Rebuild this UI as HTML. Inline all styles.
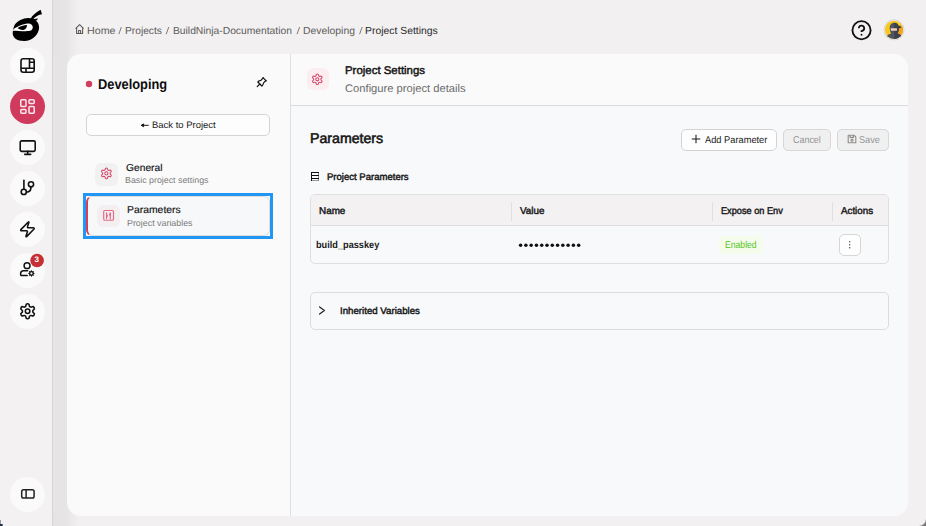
<!DOCTYPE html>
<html><head><meta charset="utf-8">
<style>
*{box-sizing:border-box;margin:0;padding:0}
html,body{width:926px;height:526px;overflow:hidden;background:#f2f0f1;font-family:"Liberation Sans",sans-serif;color:#111}
.a{position:absolute}
.t{position:absolute;white-space:nowrap;line-height:1;transform-origin:0 0}
.circ{position:absolute;left:10px;width:35px;height:35px;border-radius:50%;background:#fafafa}
</style></head><body>

<!-- shadow band right of sidebar -->
<div class="a" style="left:53px;top:0;width:30px;height:526px;background:linear-gradient(to right,#e4e2e3 0px,#e7e5e6 14px,#f2f0f1 26px)"></div>
<div class="a" style="left:53px;top:54px;width:14px;height:462px;background:#e6e4e5"></div>

<!-- sidebar -->
<div class="a" style="left:0;top:0;width:53px;height:526px;background:#f3f1f2;border-right:1px solid #d6d4d5"></div>

<!-- panel -->
<div class="a" style="left:67px;top:54px;width:841px;height:462px;background:#fafafa;border-radius:14px;overflow:hidden">
  <div class="a" style="left:223px;top:0;width:1px;height:462px;background:#dfdfdf"></div>
  <div class="a" style="left:224px;top:51px;width:617px;height:1px;background:#dcdcdc"></div>
  <div class="a" style="left:224px;top:52px;width:617px;height:410px;background:#f8f9fb"></div>
</div>

<!-- sidebar circles -->
<div class="circ" style="top:48px"></div>
<div class="circ" style="top:88.5px;background:#d03b5d"></div>
<div class="circ" style="top:129.5px"></div>
<div class="circ" style="top:170.5px"></div>
<div class="circ" style="top:211.5px"></div>
<div class="circ" style="top:252.5px"></div>
<div class="circ" style="top:293.5px"></div>
<div class="circ" style="top:477px"></div>

<svg class="a" style="left:0;top:0" width="926" height="526" viewBox="0 0 926 526">
  <!-- logo -->
  <path d="M14.6 25 C17.2 21 23 18.2 28.2 18.1 C34.2 18 39.2 21.6 39.1 27.6 C39 33.6 33.6 40.6 25.2 41 C17.2 41.4 12.4 37.6 12.7 33 C12.9 30 13.6 27 14.6 25 Z" fill="#000"/>
  <path d="M30.4 18.9 C32.4 15.6 36 12 40.6 9.8 L42 14.2 C38.6 14.6 35.2 16.6 32.9 19.6 Z" fill="#000"/>
  <path d="M32.6 19.2 L37.9 18.5 L36.9 20.3 L33.6 20.9 Z" fill="#000"/>
  <path d="M12.9 29.9 C16 27.4 21.2 24.4 27.1 23.6 C30.6 23.1 33 24.9 32.8 27.6 C32.6 30 30.6 31.1 28.6 31.1 C23.2 31.2 17.2 31 12.9 30.7 Z" fill="#fff"/>
  <path d="M17.6 28 C20 26.2 23.8 25 27.1 24.9 C26.9 27.6 25.3 29.7 23.1 29.9 C20.9 30.1 18.9 29.2 17.6 28 Z" fill="#000"/>
  <!-- icon 1 layout -->
  <g fill="none" stroke="#111" stroke-width="1.6" stroke-linejoin="round">
    <rect x="21" y="58.8" width="13.2" height="13.4" rx="2.2"/>
    <path d="M21 68.2 H34.2 M29.5 58.8 V68.2 M29.5 62.3 H34.2 M26 68.2 V72.2"/>
  </g>
  <!-- icon 2 dashboard (lucide layout-dashboard 18px) -->
  <g transform="translate(18.5 97.4) scale(0.75)" fill="none" stroke="#fde8ee" stroke-width="2" stroke-linejoin="round">
    <rect x="3" y="3" width="7" height="9" rx="1.3"/>
    <rect x="14" y="3" width="7" height="5" rx="1.3"/>
    <rect x="14" y="12" width="7" height="9" rx="1.3"/>
    <rect x="3" y="16" width="7" height="5" rx="1.3"/>
  </g>
  <!-- monitor -->
  <g transform="translate(18.7 138.6) scale(0.75)" fill="none" stroke="#111" stroke-width="2.1" stroke-linecap="round" stroke-linejoin="round">
    <rect x="2" y="3" width="20" height="14" rx="2"/>
    <path d="M8 21h8 M12 17v4"/>
  </g>
  <!-- git -->
  <g fill="none" stroke="#111" stroke-width="1.6" stroke-linecap="round">
    <path d="M23.9 180.2 V189.3"/>
    <circle cx="23.8" cy="191.9" r="2.6"/>
    <circle cx="31" cy="184.3" r="2.6"/>
    <path d="M31 186.9 C31 190 29.2 192 26.4 192.2"/>
  </g>
  <!-- zap -->
  <g transform="translate(18.45 220.3) scale(0.75)" fill="none" stroke="#111" stroke-width="2.1" stroke-linecap="round" stroke-linejoin="round">
    <path d="M4 14a1 1 0 0 1-.78-1.63l9.9-10.2a.5.5 0 0 1 .86.46l-1.92 6.02A1 1 0 0 0 13 10h7a1 1 0 0 1 .78 1.63l-9.9 10.2a.5.5 0 0 1-.86-.46l1.92-6.02A1 1 0 0 0 11 14z"/>
  </g>
  <!-- user cog -->
  <g fill="none" stroke="#111" stroke-width="1.5" stroke-linecap="round" stroke-linejoin="round">
    <circle cx="27.05" cy="265.65" r="2.95"/>
    <path d="M27.6 270.8 H23.6 C21.8 270.8 20.6 272.2 20.6 273.8 V274.4 C20.6 275.1 21.1 275.6 21.8 275.6 H27.2"/>
  </g>
  <g fill="#111">
    <path d="M31.4 269.9 L32.3 271.3 L33.9 270.9 L33.5 272.5 L34.9 273.4 L33.5 274.3 L33.9 275.9 L32.3 275.5 L31.4 276.9 L30.5 275.5 L28.9 275.9 L29.3 274.3 L27.9 273.4 L29.3 272.5 L28.9 270.9 L30.5 271.3 Z"/>
  </g>
  <circle cx="31.4" cy="273.4" r="1.1" fill="#fafafa"/>
  <!-- badge -->
  <circle cx="37.1" cy="260.5" r="6.8" fill="#c62f33"/>
  <!-- settings -->
  <g transform="translate(18.6 302.3) scale(0.75)" fill="none" stroke="#111" stroke-width="2.1" stroke-linecap="round" stroke-linejoin="round">
    <path d="M12.22 2h-.44a2 2 0 0 0-2 2v.18a2 2 0 0 1-1 1.73l-.43.25a2 2 0 0 1-2 0l-.15-.08a2 2 0 0 0-2.73.73l-.22.38a2 2 0 0 0 .73 2.73l.15.1a2 2 0 0 1 1 1.72v.51a2 2 0 0 1-1 1.74l-.15.09a2 2 0 0 0-.73 2.73l.22.38a2 2 0 0 0 2.73.73l.15-.08a2 2 0 0 1 2 0l.43.25a2 2 0 0 1 1 1.73V20a2 2 0 0 0 2 2h.44a2 2 0 0 0 2-2v-.18a2 2 0 0 1 1-1.73l.43-.25a2 2 0 0 1 2 0l.15.08a2 2 0 0 0 2.73-.73l.22-.39a2 2 0 0 0-.73-2.73l-.15-.08a2 2 0 0 1-1-1.74v-.5a2 2 0 0 1 1-1.74l.15-.09a2 2 0 0 0 .73-2.73l-.22-.38a2 2 0 0 0-2.73-.73l-.15.08a2 2 0 0 1-2 0l-.43-.25a2 2 0 0 1-1-1.73V4a2 2 0 0 0-2-2z"/>
    <circle cx="12" cy="12" r="3"/>
  </g>
  <!-- panel toggle -->
  <g fill="none" stroke="#222" stroke-width="1.5">
    <rect x="21.7" y="489.7" width="12.4" height="8.3" rx="1.8"/>
    <path d="M26.1 489.7 V498"/>
  </g>

  <!-- breadcrumb home icon -->
  <g fill="none" stroke="#5a5a5a" stroke-width="1.05" stroke-linejoin="round">
    <path d="M75.6 28.6 L79.6 24.6 L83.6 28.6 M76.6 27.6 V33.4 H82.6 V27.6 M78.6 33.4 V30.5 H80.6 V33.4"/>
  </g>
  <!-- separators -->
  <g stroke="#6e6e6e" stroke-width="0.9">
    <path d="M121.4 27 L118.8 34.2 M168.8 27 L166.2 34.2 M299.6 27 L297 34.2 M362.2 27 L359.6 34.2"/>
  </g>

  <!-- help -->
  <g transform="translate(850.6 19.3) scale(0.91)" fill="none" stroke="#111" stroke-width="2" stroke-linecap="round" stroke-linejoin="round">
    <circle cx="12" cy="12" r="10"/>
    <path d="M9.09 9a3 3 0 0 1 5.83 1c0 2-3 3-3 3"/>
    <path d="M12 17h.01"/>
  </g>
  <!-- avatar -->
  <defs><clipPath id="avc"><circle cx="894" cy="29.8" r="9.1"/></clipPath></defs>
  <circle cx="894" cy="29.8" r="10.5" fill="#d6d6d7"/><circle cx="894" cy="29.8" r="9.9" fill="#e4e4e5"/>
  <g clip-path="url(#avc)">
    <rect x="884" y="19" width="21" height="22" fill="#f8c81c"/>
    <path d="M894.5 26 H905 V41 H894.5 Z" fill="#f5a21d"/>
    <path d="M885.5 41 C885.5 36.5 887.5 34.6 891.2 33.6 C890 32 889.7 30 889.7 27.6 C889.7 24.5 891.8 22.7 894.3 22.7 C896.8 22.7 898.9 24.5 898.9 27.6 C898.9 30 898.6 32 897.4 33.6 C901.1 34.6 903.1 36.5 903.1 41 Z" fill="#4d5360"/>
    <path d="M894.3 22.7 C896.8 22.7 898.9 24.5 898.9 27.6 C898.9 30 898.6 32 897.4 33.6 C901.1 34.6 903.1 36.5 903.1 41 H894.3 Z" fill="#3b414c"/>
  </g>
  <path d="M898.4 26.6 L900.6 25.4 L900.4 26.9 L901.7 27.6 L898.6 28.4 Z" fill="#2d323b"/>
  <rect x="890.7" y="28.3" width="6.3" height="2.4" rx="0.4" fill="#f6cbb8"/>
  <!-- developing dot -->
  <circle cx="89" cy="84" r="3.2" fill="#d03f5f"/>
  <!-- pin (tabler) -->
  <g transform="translate(254.6 75.3) scale(0.58)" fill="none" stroke="#111" stroke-width="2" stroke-linecap="round" stroke-linejoin="round">
    <path d="M15 4.5l-4 4l-4 1.5l-1.5 1.5l7 7l1.5 -1.5l1.5 -4l4 -4"/>
    <path d="M9 15l-4.5 4.5"/>
    <path d="M14.5 4l5.5 5.5"/>
  </g>
</svg>

<!-- back button -->
<div class="a" style="left:86px;top:114px;width:184px;height:22px;border:1px solid #d5d5d5;border-radius:5px;background:#fdfdfd"></div>
<svg class="a" style="left:140px;top:121px" width="10" height="9" viewBox="0 0 10 9" fill="none" stroke="#1a1a1a" stroke-width="1" stroke-linejoin="round"><path d="M1.6 4.3 H8.7"/><path d="M1.2 4.3 L3.6 2.9 V5.7 Z" fill="#1a1a1a"/></svg>

<!-- general item -->
<div class="a" style="left:95.3px;top:163px;width:22.4px;height:22.6px;border-radius:6px;background:#f2f1f2"></div>
<svg class="a" style="left:100.1px;top:167.2px" width="12.8" height="12.8" viewBox="0 0 24 24" fill="none" stroke="#d2476a" stroke-width="2" stroke-linecap="round" stroke-linejoin="round">
  <path d="M12.22 2h-.44a2 2 0 0 0-2 2v.18a2 2 0 0 1-1 1.73l-.43.25a2 2 0 0 1-2 0l-.15-.08a2 2 0 0 0-2.73.73l-.22.38a2 2 0 0 0 .73 2.73l.15.1a2 2 0 0 1 1 1.72v.51a2 2 0 0 1-1 1.74l-.15.09a2 2 0 0 0-.73 2.73l.22.38a2 2 0 0 0 2.73.73l.15-.08a2 2 0 0 1 2 0l.43.25a2 2 0 0 1 1 1.73V20a2 2 0 0 0 2 2h.44a2 2 0 0 0 2-2v-.18a2 2 0 0 1 1-1.73l.43-.25a2 2 0 0 1 2 0l.15.08a2 2 0 0 0 2.73-.73l.22-.39a2 2 0 0 0-.73-2.73l-.15-.08a2 2 0 0 1-1-1.74v-.5a2 2 0 0 1 1-1.74l.15-.09a2 2 0 0 0 .73-2.73l-.22-.38a2 2 0 0 0-2.73-.73l-.15.08a2 2 0 0 1-2 0l-.43-.25a2 2 0 0 1-1-1.73V4a2 2 0 0 0-2-2z"/>
  <circle cx="12" cy="12" r="3"/>
</svg>

<!-- selected item -->
<div class="a" style="left:83px;top:193px;width:190px;height:46px;border:3px solid #2196f3"></div>
<div class="a" style="left:86px;top:196px;width:184px;height:40px;border:1px solid #dcdcdc;border-left:2px solid #d0405f;border-radius:6px;background:#f7f8fa"></div>
<div class="a" style="left:97.1px;top:205px;width:22.6px;height:21.8px;border-radius:6px;background:#f5eef1"></div>
<svg class="a" style="left:101px;top:208px" width="15" height="15" viewBox="101 208 15 15" fill="none" stroke="#e06a86" stroke-width="1.15" stroke-linecap="round" stroke-linejoin="round">
  <rect x="103.7" y="210.5" width="9.8" height="9.7" rx="1.3"/>
  <path d="M106.6 212.9 V218.6 M110.3 212.9 V218.9"/>
  <path d="M106.3 214.6 L107.6 215.8 L106.3 217" stroke-width="1.1"/>
  <path d="M110.6 213.4 L109.4 214.5 L110.6 215.6" stroke-width="1.1"/>
</svg>

<!-- right header icon -->
<div class="a" style="left:307.4px;top:68px;width:21.8px;height:22px;border-radius:6px;background:#fbedf0"></div>
<svg class="a" style="left:311.2px;top:73px" width="12.6" height="12.6" viewBox="0 0 24 24" fill="none" stroke="#d2476a" stroke-width="2" stroke-linecap="round" stroke-linejoin="round">
  <path d="M12.22 2h-.44a2 2 0 0 0-2 2v.18a2 2 0 0 1-1 1.73l-.43.25a2 2 0 0 1-2 0l-.15-.08a2 2 0 0 0-2.73.73l-.22.38a2 2 0 0 0 .73 2.73l.15.1a2 2 0 0 1 1 1.72v.51a2 2 0 0 1-1 1.74l-.15.09a2 2 0 0 0-.73 2.73l.22.38a2 2 0 0 0 2.73.73l.15-.08a2 2 0 0 1 2 0l.43.25a2 2 0 0 1 1 1.73V20a2 2 0 0 0 2 2h.44a2 2 0 0 0 2-2v-.18a2 2 0 0 1 1-1.73l.43-.25a2 2 0 0 1 2 0l.15.08a2 2 0 0 0 2.73-.73l.22-.39a2 2 0 0 0-.73-2.73l-.15-.08a2 2 0 0 1-1-1.74v-.5a2 2 0 0 1 1-1.74l.15-.09a2 2 0 0 0 .73-2.73l-.22-.38a2 2 0 0 0-2.73-.73l-.15.08a2 2 0 0 1-2 0l-.43-.25a2 2 0 0 1-1-1.73V4a2 2 0 0 0-2-2z"/>
  <circle cx="12" cy="12" r="3"/>
</svg>

<!-- buttons -->
<div class="a" style="left:681px;top:129px;width:96px;height:22px;border:1px solid #d3d3d3;border-radius:5px;background:#fefefe"></div>
<svg class="a" style="left:691px;top:134px" width="10" height="10" viewBox="0 0 10 10" fill="none" stroke="#1a1a1a" stroke-width="1.05"><path d="M5 0.7 V9.2 M0.8 5 H9.3"/></svg>
<div class="a" style="left:783px;top:129px;width:48px;height:22px;border:1px solid #d7d7d7;border-radius:5px;background:#f0f0f1"></div>
<div class="a" style="left:837px;top:129px;width:52px;height:22px;border:1px solid #d7d7d7;border-radius:5px;background:#f0f0f1"></div>
<svg class="a" style="left:846.5px;top:133.8px" width="10" height="10" viewBox="0 0 10 10" fill="none" stroke="#8c8c8c" stroke-width="1.1" stroke-linejoin="round"><path d="M1.2 1.2 H7 L8.8 3 V8.8 H1.2 Z"/><path d="M3 1.2 V3.4 H6.4 V1.2"/><circle cx="5" cy="6.2" r="1.1"/></svg>

<!-- project parameters icon -->
<svg class="a" style="left:310px;top:171px" width="10" height="11" viewBox="310 171 10 11" shape-rendering="crispEdges">
  <rect x="311" y="180" width="8" height="1" fill="#9a9a9a"/><rect x="318" y="172" width="1" height="9" fill="#8a8a8a"/>
  <rect x="311" y="172" width="1" height="9" fill="#111"/><rect x="311" y="172" width="7.5" height="1" fill="#111"/>
  <rect x="311" y="175" width="7.5" height="1" fill="#111"/><rect x="311" y="178" width="7.5" height="1" fill="#111"/>
</svg>

<!-- table -->
<div class="a" style="left:310px;top:194px;width:579px;height:70px;border:1px solid #dfdfdf;border-radius:5px;overflow:hidden;background:#f8f9fb">
  <div class="a" style="left:0;top:0;width:577px;height:31px;background:#f3f1f2;border-bottom:1px solid #dedede"></div>
  <div class="a" style="left:200px;top:7px;width:1px;height:18.5px;background:#e1dfe0"></div>
  <div class="a" style="left:401px;top:7px;width:1px;height:18.5px;background:#e1dfe0"></div>
  <div class="a" style="left:521px;top:7px;width:1px;height:18.5px;background:#e1dfe0"></div>
</div>
<svg class="a" style="left:514px;top:240px" width="72" height="10" viewBox="0 0 72 10" fill="#111">
  <circle cx="6.6" cy="5.3" r="1.75"/><circle cx="11.88" cy="5.3" r="1.75"/><circle cx="17.16" cy="5.3" r="1.75"/><circle cx="22.44" cy="5.3" r="1.75"/><circle cx="27.72" cy="5.3" r="1.75"/><circle cx="33" cy="5.3" r="1.75"/><circle cx="38.28" cy="5.3" r="1.75"/><circle cx="43.56" cy="5.3" r="1.75"/><circle cx="48.84" cy="5.3" r="1.75"/><circle cx="54.12" cy="5.3" r="1.75"/><circle cx="59.4" cy="5.3" r="1.75"/><circle cx="64.68" cy="5.3" r="1.75"/>
</svg>
<div class="a" style="left:719px;top:236px;width:44px;height:18px;border-radius:3px;background:#f5fcec"></div>
<div class="a" style="left:839px;top:234px;width:22px;height:21.5px;border:1px solid #d6d6d6;border-radius:5px;background:#fefefe"></div>
<svg class="a" style="left:847px;top:239px" width="6" height="12" viewBox="0 0 6 12" fill="#444"><circle cx="2.7" cy="2.8" r="0.7"/><circle cx="2.7" cy="5.8" r="0.7"/><circle cx="2.7" cy="8.8" r="0.7"/></svg>

<!-- inherited -->
<div class="a" style="left:310px;top:292px;width:579px;height:38px;border:1px solid #dddddd;border-radius:5px;background:#f8f9fb"></div>
<svg class="a" style="left:317px;top:305px" width="10" height="11" viewBox="0 0 10 11" fill="none" stroke="#222" stroke-width="1.25" stroke-linecap="round" stroke-linejoin="round"><path d="M2.6 1.9 L7.4 5.5 L2.6 9.1"/></svg>

<div class="t" style="left:86.76px;top:27px;font-size:10.29px;font-weight:400;color:#5c5c5c;transform:scaleX(1.042);text-rendering:geometricPrecision;">Home</div>
<div class="t" style="left:125.01px;top:27px;font-size:10.29px;font-weight:400;color:#5c5c5c;transform:scaleX(0.994);text-rendering:geometricPrecision;">Projects</div>
<div class="t" style="left:173.0px;top:27px;font-size:10.29px;font-weight:400;color:#5c5c5c;transform:scaleX(1.0);text-rendering:geometricPrecision;">BuildNinja-Documentation</div>
<div class="t" style="left:302.79px;top:27px;font-size:10.29px;font-weight:400;color:#5c5c5c;transform:scaleX(1.01);text-rendering:geometricPrecision;">Developing</div>
<div class="t" style="left:364.99px;top:27px;font-size:10.29px;font-weight:400;color:#2b2b2b;transform:scaleX(1.011);text-rendering:geometricPrecision;">Project Settings</div>
<div class="t" style="left:98.4px;top:78px;font-size:14.19px;font-weight:700;color:#0d0d0d;transform:scaleX(0.904);text-rendering:geometricPrecision;">Developing</div>
<div class="t" style="left:152.29px;top:121px;font-size:9.37px;font-weight:400;color:#1a1a1a;transform:scaleX(1.011);text-rendering:geometricPrecision;">Back to Project</div>
<div class="t" style="left:126.1px;top:164px;font-size:10.0px;font-weight:400;color:#141414;transform:scaleX(1.026);text-rendering:geometricPrecision;-webkit-text-stroke:0.15px currentColor;">General</div>
<div class="t" style="left:125.08px;top:176px;font-size:8.7px;font-weight:400;color:#7b7b7b;transform:scaleX(1.017);text-rendering:geometricPrecision;">Basic project settings</div>
<div class="t" style="left:127.06px;top:206px;font-size:10.0px;font-weight:400;color:#141414;transform:scaleX(1.039);text-rendering:geometricPrecision;-webkit-text-stroke:0.15px currentColor;">Parameters</div>
<div class="t" style="left:127.09px;top:219px;font-size:8.8px;font-weight:400;color:#7b7b7b;transform:scaleX(1.008);text-rendering:geometricPrecision;">Project variables</div>
<div class="t" style="left:344.58px;top:66px;font-size:11.18px;font-weight:400;color:#141414;transform:scaleX(1.023);text-rendering:geometricPrecision;-webkit-text-stroke:0.45px currentColor;">Project Settings</div>
<div class="t" style="left:345.3px;top:84px;font-size:11.04px;font-weight:400;color:#6b6b6b;transform:scaleX(1.014);text-rendering:geometricPrecision;">Configure project details</div>
<div class="t" style="left:309.5px;top:131px;font-size:14.12px;font-weight:400;color:#141414;transform:scaleX(1.003);text-rendering:geometricPrecision;-webkit-text-stroke:0.55px currentColor;">Parameters</div>
<div class="t" style="left:326.5px;top:173px;font-size:9.65px;font-weight:400;color:#1a1a1a;transform:scaleX(0.991);text-rendering:geometricPrecision;-webkit-text-stroke:0.45px currentColor;">Project Parameters</div>
<div class="t" style="left:704.5px;top:136px;font-size:9.79px;font-weight:400;color:#1a1a1a;transform:scaleX(0.948);text-rendering:geometricPrecision;">Add Parameter</div>
<div class="t" style="left:793.1px;top:136px;font-size:9.93px;font-weight:400;color:#939393;transform:scaleX(0.9);text-rendering:geometricPrecision;">Cancel</div>
<div class="t" style="left:858.88px;top:136px;font-size:9.93px;font-weight:400;color:#939393;transform:scaleX(0.924);text-rendering:geometricPrecision;">Save</div>
<div class="t" style="left:319.0px;top:207px;font-size:9.93px;font-weight:400;color:#1a1a1a;transform:scaleX(0.996);text-rendering:geometricPrecision;-webkit-text-stroke:0.45px currentColor;">Name</div>
<div class="t" style="left:519.5px;top:207px;font-size:9.93px;font-weight:400;color:#1a1a1a;transform:scaleX(0.992);text-rendering:geometricPrecision;-webkit-text-stroke:0.45px currentColor;">Value</div>
<div class="t" style="left:720.7px;top:207px;font-size:9.93px;font-weight:400;color:#1a1a1a;transform:scaleX(0.925);text-rendering:geometricPrecision;-webkit-text-stroke:0.45px currentColor;">Expose on Env</div>
<div class="t" style="left:840.5px;top:207px;font-size:9.93px;font-weight:400;color:#1a1a1a;transform:scaleX(0.985);text-rendering:geometricPrecision;-webkit-text-stroke:0.45px currentColor;">Actions</div>
<div class="t" style="left:316.47px;top:241px;font-size:9.93px;font-weight:700;color:#1a1a1a;transform:scaleX(0.925);text-rendering:geometricPrecision;">build_passkey</div>
<div class="t" style="left:724.83px;top:241px;font-size:9.93px;font-weight:400;color:#52c41a;transform:scaleX(0.869);text-rendering:geometricPrecision;">Enabled</div>
<div class="t" style="left:339.9px;top:307px;font-size:9.65px;font-weight:400;color:#1a1a1a;transform:scaleX(1.005);text-rendering:geometricPrecision;-webkit-text-stroke:0.45px currentColor;">Inherited Variables</div>
<div class="t" style="left:34.6px;top:256.4px;font-size:8px;font-weight:700;color:#fff;text-rendering:geometricPrecision">3</div>

<!-- corners -->
<svg class="a" style="left:914px;top:514px" width="12" height="12" viewBox="914 514 12 12"><path d="M926 519.2 A 7.5 7.5 0 0 1 919.2 526 L926 526 Z" fill="#8f8f8f"/><path d="M926 521.5 A 5 5 0 0 1 921.5 526 L926 526 Z" fill="#6f6f6f"/></svg>
<div class="a" style="left:0;top:520px;width:1px;height:6px;background:#9a9a9a"></div>
<div class="a" style="left:0;top:524px;width:2px;height:2px;background:#2a2f36"></div>
<div class="a" style="left:2px;top:524px;width:1px;height:2px;background:#4a78b0"></div>
</body></html>
